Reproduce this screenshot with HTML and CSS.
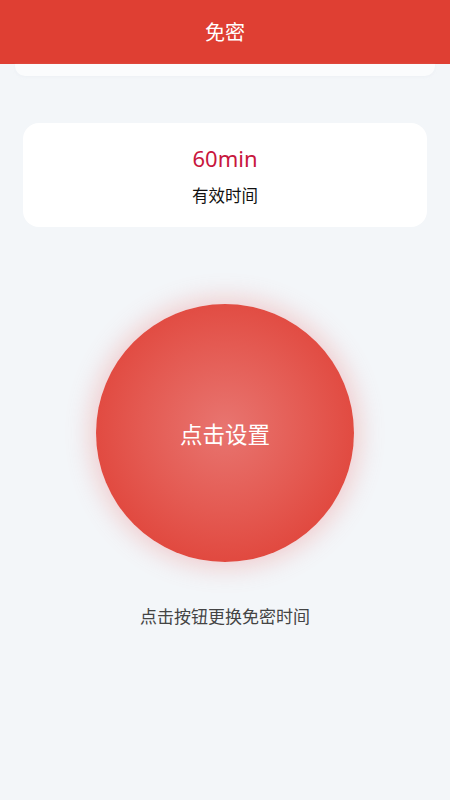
FILE: index.html
```html
<!DOCTYPE html>
<html lang="zh">
<head>
<meta charset="utf-8">
<link rel="stylesheet" href="styles.css">
</head>
<body>
<header class="topbar"><span class="title">免密</span></header>
<main class="page">
  <div class="ghost-card"></div>
  <section class="card">
    <div class="value">60min</div>
    <div class="label">有效时间</div>
  </section>
  <div class="btn-wrap">
    <button class="circle-btn">点击设置</button>
  </div>
  <p class="hint">点击按钮更换免密时间</p>
</main>
</body>
</html>
```

FILE: styles.css
```css
html, body {
  margin: 0;
  padding: 0;
  background: #f3f6f9;
  font-family: "Noto Sans", "Noto Sans CJK SC", sans-serif;
}
.topbar {
  height: 64px;
  background: #df3f33;
  display: flex;
  align-items: center;
  justify-content: center;
}
.title {
  color: #ffffff;
  font-size: 20px;
  line-height: 1;
  margin-top: 2px;
}
.page {
  display: flex;
  flex-direction: column;
  align-items: stretch;
}
.ghost-card {
  height: 12px;
  margin: 0 15px;
  background: #fbfcfd;
  border-radius: 0 0 10px 10px;
  box-shadow: 0 1px 3px rgba(225, 230, 238, 0.35);
}
.card {
  margin: 47px 23px 0;
  height: 104px;
  background: #ffffff;
  border-radius: 16px;
  display: flex;
  flex-direction: column;
  align-items: center;
  box-sizing: border-box;
  padding-top: 20px;
}
.value {
  font-family: "Noto Sans", sans-serif;
  color: #c8163d;
  font-size: 22px;
  line-height: 30px;
}
.label {
  color: #111111;
  font-size: 16.5px;
  line-height: 22px;
  margin-top: 12px;
}
.btn-wrap {
  display: flex;
  justify-content: center;
  margin-top: 77px;
}
.circle-btn {
  width: 258px;
  height: 258px;
  border: none;
  border-radius: 50%;
  padding: 0;
  background: radial-gradient(circle at 50% 48%, #e87570 0%, #e45a52 45%, #e0443a 80%, #df4036 100%);
  box-shadow: 0 0 24px 6px rgba(236, 110, 105, 0.3);
  color: #ffffff;
  font-family: "Noto Sans CJK SC", sans-serif;
  font-size: 22.5px;
  line-height: 1;
}
.hint {
  margin: 45px 0 0;
  text-align: center;
  color: #444444;
  font-size: 17px;
  line-height: 20px;
}
```
